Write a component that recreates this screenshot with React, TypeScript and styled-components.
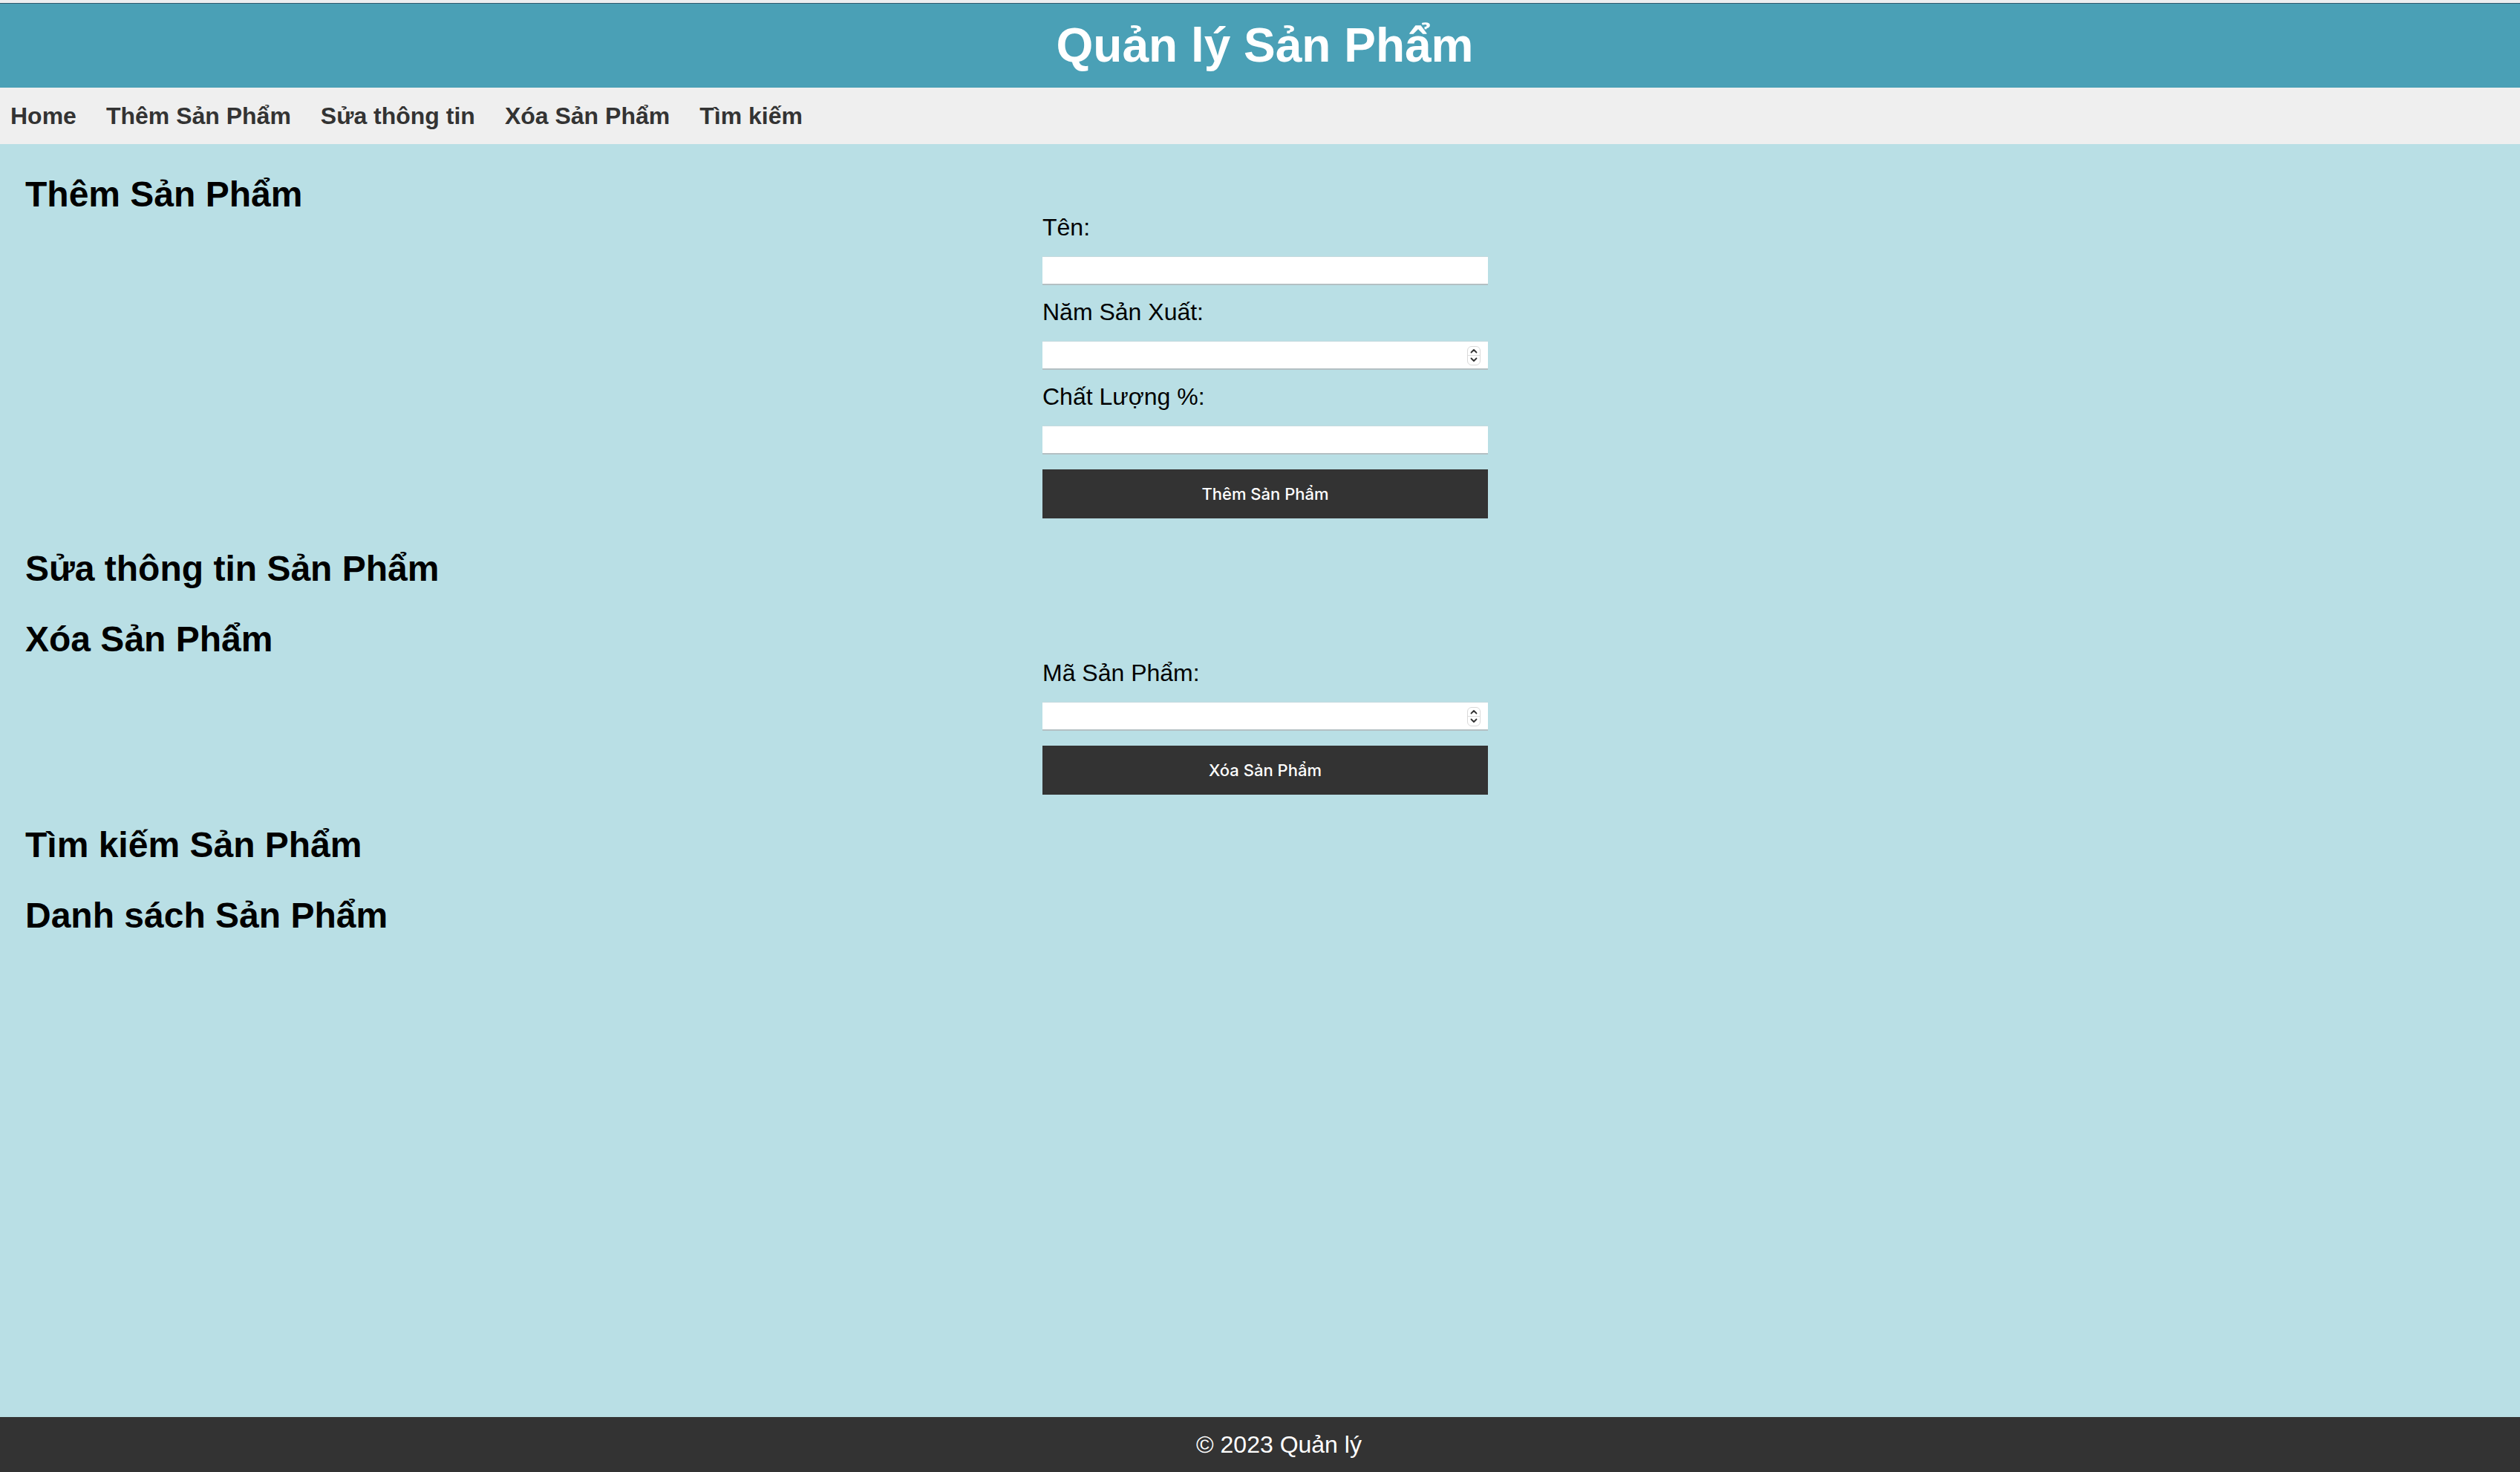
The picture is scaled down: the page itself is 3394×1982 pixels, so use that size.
import React from "react";
import styled, { createGlobalStyle } from "styled-components";

const GlobalStyle = createGlobalStyle`
  html, body {
    margin: 0;
    padding: 0;
  }
  body {
    font-family: "Liberation Sans", Arial, sans-serif;
    background: #b9dfe5;
  }
  * { box-sizing: border-box; }
`;

const Page = styled.div`
  min-height: 100vh;
  display: flex;
  flex-direction: column;
`;

const BrowserStrip = styled.div`
  height: 5px;
  background: #eceef0;
  border-bottom: 1px solid #2f5a6e;
`;

const Header = styled.header`
  height: 113px;
  background: #4aa0b6;
  display: flex;
  align-items: center;
  justify-content: center;
  padding-left: 13px;
`;

const Title = styled.h1`
  margin: 0;
  font-size: 64px;
  line-height: 73px;
  font-weight: 700;
  color: #ffffff;
`;

const Nav = styled.nav`
  height: 76px;
  background: #efefef;
  display: flex;
  align-items: center;
  gap: 40px;
  padding-left: 14px;
`;

const NavLink = styled.a`
  font-size: 32px;
  line-height: 37px;
  font-weight: 700;
  color: #333333;
  text-decoration: none;
`;

const Main = styled.main`
  flex: 1;
  display: flex;
  flex-direction: column;
  gap: 40px;
  padding: 40px 20px 0 34px;
`;

const Section = styled.section`
  display: grid;
  grid-template-columns: 1fr 600px 1fr;
  align-items: start;
`;

const Heading = styled.h2`
  grid-column: 1;
  margin: 0;
  font-size: 48px;
  line-height: 55px;
  font-weight: 700;
  color: #000000;
  white-space: nowrap;
`;

const Form = styled.form<{ $top: number }>`
  grid-column: 2;
  display: flex;
  flex-direction: column;
  margin-top: ${(p) => p.$top}px;
`;

const Label = styled.label`
  display: block;
  font-size: 32px;
  line-height: 37px;
  color: #000000;
  margin-bottom: 20px;
`;

const InputWrap = styled.div`
  position: relative;
  margin-bottom: 18px;
`;

const Input = styled.input`
  display: block;
  width: 100%;
  height: 39px;
  margin: 0;
  padding: 0 8px;
  background: #ffffff;
  border: none;
  border-top: 1px solid #c4dade;
  border-bottom: 2px solid #b4c0c3;
  font-family: "Liberation Sans", Arial, sans-serif;
  font-size: 26px;
  outline: none;
  -moz-appearance: textfield;
  &::-webkit-outer-spin-button,
  &::-webkit-inner-spin-button {
    -webkit-appearance: none;
    margin: 0;
  }
`;

const Spinner = styled.div`
  position: absolute;
  right: 10px;
  top: 50%;
  transform: translateY(-50%);
  width: 18px;
  height: 26px;
  border: 1px solid #d9d9d9;
  border-radius: 6px;
  background: #ffffff;
  display: flex;
  flex-direction: column;
  overflow: hidden;
`;

const SpinHalf = styled.div<{ $divider?: boolean }>`
  flex: 1;
  display: flex;
  align-items: center;
  justify-content: center;
  border-bottom: ${(p) => (p.$divider ? "1px solid #dcdcdc" : "none")};
`;

const Button = styled.button`
  margin-top: 2px;
  height: 66px;
  width: 100%;
  border: none;
  background: #333333;
  color: #ffffff;
  font-family: Inter, "Noto Sans", sans-serif;
  font-size: 22px;
  font-weight: 500;
  cursor: pointer;
`;

const Footer = styled.footer`
  height: 74px;
  background: #333333;
  color: #ffffff;
  display: flex;
  align-items: center;
  justify-content: center;
  padding-left: 51px;
  font-size: 32px;
  line-height: 37px;
`;

const Chevron = ({ up }: { up?: boolean }) => (
  <svg width="10" height="7" viewBox="0 0 10 7">
    <path
      d={up ? "M1.5 5.5 L5 2 L8.5 5.5" : "M1.5 1.5 L5 5 L8.5 1.5"}
      fill="none"
      stroke="#333"
      strokeWidth="1.8"
      strokeLinecap="round"
      strokeLinejoin="round"
    />
  </svg>
);

const Field = ({ label, number }: { label: string; number?: boolean }) => (
  <>
    <Label>{label}</Label>
    <InputWrap>
      <Input type={number ? "number" : "text"} />
      {number && (
        <Spinner>
          <SpinHalf $divider>
            <Chevron up />
          </SpinHalf>
          <SpinHalf>
            <Chevron />
          </SpinHalf>
        </Spinner>
      )}
    </InputWrap>
  </>
);

export default function App() {
  return (
    <Page>
      <GlobalStyle />
      <BrowserStrip />
      <Header>
        <Title>Quản lý Sản Phẩm</Title>
      </Header>
      <Nav>
        <NavLink href="#">Home</NavLink>
        <NavLink href="#">Thêm Sản Phẩm</NavLink>
        <NavLink href="#">Sửa thông tin</NavLink>
        <NavLink href="#">Xóa Sản Phẩm</NavLink>
        <NavLink href="#">Tìm kiếm</NavLink>
      </Nav>
      <Main>
        <Section>
          <Heading>Thêm Sản Phẩm</Heading>
          <Form $top={54} onSubmit={(e) => e.preventDefault()}>
            <Field label="Tên:" />
            <Field label="Năm Sản Xuất:" number />
            <Field label="Chất Lượng %:" />
            <Button type="submit">Thêm Sản Phẩm</Button>
          </Form>
        </Section>
        <Section>
          <Heading>Sửa thông tin Sản Phẩm</Heading>
        </Section>
        <Section>
          <Heading>Xóa Sản Phẩm</Heading>
          <Form $top={55} onSubmit={(e) => e.preventDefault()}>
            <Field label="Mã Sản Phẩm:" number />
            <Button type="submit">Xóa Sản Phẩm</Button>
          </Form>
        </Section>
        <Section>
          <Heading>Tìm kiếm Sản Phẩm</Heading>
        </Section>
        <Section>
          <Heading>Danh sách Sản Phẩm</Heading>
        </Section>
      </Main>
      <Footer>© 2023 Quản lý</Footer>
    </Page>
  );
}
